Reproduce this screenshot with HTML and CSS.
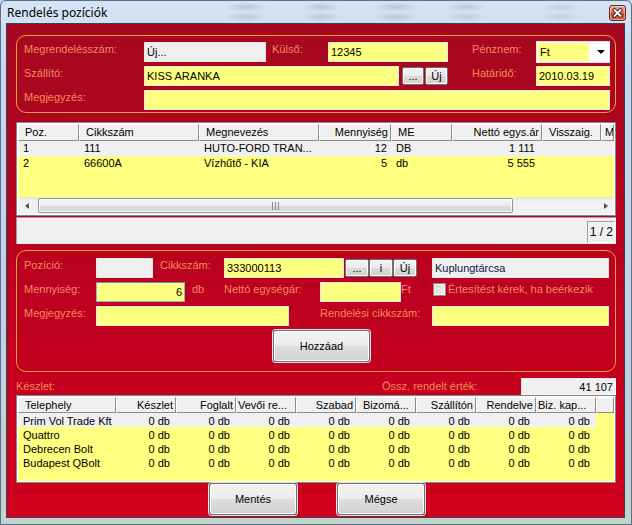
FILE: index.html
```html
<!DOCTYPE html>
<html lang="hu">
<head>
<meta charset="utf-8">
<title>Rendelés pozíciók</title>
<link rel="stylesheet" href="styles.css">
</head>
<body>
<div class="window">
  <div class="titlebar">
    <span class="title">Rendelés pozíciók</span>
    <span class="close">
      <svg width="15" height="14" viewBox="0 0 15 14">
        <path d="M4.5 4 L10.5 10 M10.5 4 L4.5 10" stroke="#3a1a14" stroke-width="3.6" stroke-linecap="square"/>
        <path d="M4.5 4 L10.5 10 M10.5 4 L4.5 10" stroke="#ffffff" stroke-width="1.8" stroke-linecap="square"/>
      </svg>
    </span>
  </div>

  <div class="client">
    <div class="group g1">
      <div class="row">
        <span class="lbl w120">Megrendelésszám:</span>
        <span class="box gray w122">Új...</span>
        <span class="lbl ml6 w56">Külső:</span>
        <span class="box w120">12345</span>
        <span class="lbl ml24 w64">Pénznem:</span>
        <span class="select"><span class="sel-val">Ft</span><span class="sel-arrow"></span></span>
      </div>
      <div class="row">
        <span class="lbl w120">Szállító:</span>
        <span class="box w255">KISS ARANKA</span>
        <span class="sbtn ml3 w22">...</span>
        <span class="sbtn ml1 w23">Új</span>
        <span class="lbl ml24 w64">Határidő:</span>
        <span class="box w74">2010.03.19</span>
      </div>
      <div class="row">
        <span class="lbl w120">Megjegyzés:</span>
        <span class="box w466"></span>
      </div>
    </div>

    <div class="grid grid1">
      <div class="ghead cols1">
        <div class="hc">Poz.</div>
        <div class="hc">Cikkszám</div>
        <div class="hc">Megnevezés</div>
        <div class="hc r">Mennyiség</div>
        <div class="hc">ME</div>
        <div class="hc r">Nettó egys.ár</div>
        <div class="hc">Visszaig.</div>
        <div class="hc last">M</div>
      </div>
      <div class="gbody b1">
        <div class="gr cols1 sel">
          <div class="c">1</div><div class="c">111</div><div class="c">HUTO-FORD TRAN...</div>
          <div class="c r">12</div><div class="c">DB</div><div class="c r p7">1 111</div><div class="c"></div><div class="c"></div>
        </div>
        <div class="gr cols1">
          <div class="c">2</div><div class="c">66600A</div><div class="c">Vízhűtő - KIA</div>
          <div class="c r">5</div><div class="c">db</div><div class="c r p7">5 555</div><div class="c"></div><div class="c"></div>
        </div>
      </div>
      <div class="hscroll">
        <span class="sb-btn"><span class="tri-l"></span></span>
        <span class="sb-track">
          <span class="sb-thumb">
            <svg width="9" height="8" viewBox="0 0 9 8"><path d="M1.5 0 V8 M4.5 0 V8 M7.5 0 V8" stroke="#8a8a8a" stroke-width="1"/></svg>
          </span>
        </span>
        <span class="sb-btn"><span class="tri-r"></span></span>
      </div>
    </div>

    <div class="status">
      <span class="pages">1 / 2</span>
    </div>

    <div class="group g2">
      <div class="row">
        <span class="lbl w72">Pozíció:</span>
        <span class="box gray w57"></span>
        <span class="lbl ml7 w64">Cikkszám:</span>
        <span class="box w120">333000113</span>
        <span class="sbtn ml1 w24">...</span>
        <span class="sbtn w24">i</span>
        <span class="sbtn w24">Új</span>
        <span class="box gray navy ml15 w177">Kuplungtárcsa</span>
      </div>
      <div class="row">
        <span class="lbl w72">Mennyiség:</span>
        <span class="box focus r w89">6</span>
        <span class="lbl ml7 w32">db</span>
        <span class="lbl w96">Nettó egységár:</span>
        <span class="box w81"></span>
        <span class="lbl w32">Ft</span>
        <span class="chk"></span>
        <span class="lbl ml2">Értesítést kérek, ha beérkezik</span>
      </div>
      <div class="row">
        <span class="lbl w72">Megjegyzés:</span>
        <span class="box w193"></span>
        <span class="lbl ml31 w112">Rendelési cikkszám:</span>
        <span class="box w177"></span>
      </div>
      <div class="btnrow">
        <span class="btn add">Hozzáad</span>
      </div>
    </div>

    <div class="stock">
      <span class="lbl w366">Készlet:</span>
      <span class="lbl w139">Össz. rendelt érték:</span>
      <span class="total">41 107</span>
    </div>

    <div class="grid grid2">
      <div class="ghead cols2">
        <div class="hc">Telephely</div>
        <div class="hc r">Készlet</div>
        <div class="hc r">Foglalt</div>
        <div class="hc p2">Vevői re...</div>
        <div class="hc r">Szabad</div>
        <div class="hc">Bizomá...</div>
        <div class="hc r">Szállítón</div>
        <div class="hc r">Rendelve</div>
        <div class="hc p2">Biz. kap...</div>
        <div class="hc"></div>
      </div>
      <div class="gbody b2">
        <div class="gr2 cols2">
          <div class="c sel">Prim Vol Trade Kft</div><div class="c r sel">0 db</div><div class="c r sel">0 db</div><div class="c r sel">0 db</div><div class="c r sel">0 db</div><div class="c r sel">0 db</div><div class="c r sel">0 db</div><div class="c r sel">0 db</div><div class="c r sel">0 db</div><div class="c"></div>
        </div>
        <div class="gr2 cols2">
          <div class="c">Quattro</div><div class="c r">0 db</div><div class="c r">0 db</div><div class="c r">0 db</div><div class="c r">0 db</div><div class="c r">0 db</div><div class="c r">0 db</div><div class="c r">0 db</div><div class="c r">0 db</div><div class="c"></div>
        </div>
        <div class="gr2 cols2">
          <div class="c">Debrecen Bolt</div><div class="c r">0 db</div><div class="c r">0 db</div><div class="c r">0 db</div><div class="c r">0 db</div><div class="c r">0 db</div><div class="c r">0 db</div><div class="c r">0 db</div><div class="c r">0 db</div><div class="c"></div>
        </div>
        <div class="gr2 cols2">
          <div class="c">Budapest QBolt</div><div class="c r">0 db</div><div class="c r">0 db</div><div class="c r">0 db</div><div class="c r">0 db</div><div class="c r">0 db</div><div class="c r">0 db</div><div class="c r">0 db</div><div class="c r">0 db</div><div class="c"></div>
        </div>
      </div>
    </div>

    <div class="actions">
      <span class="btn save">Mentés</span>
      <span class="btn cancel">Mégse</span>
    </div>
  </div>
</div>
</body>
</html>
```

FILE: styles.css
```css
* { box-sizing: border-box; }
html, body { margin: 0; padding: 0; }
body {
  width: 632px;
  height: 525px;
  overflow: hidden;
  font-family: "Liberation Sans", Arial, sans-serif;
  font-size: 11px;
  color: #000;
  background: #c4d6ea;
}

/* window frame */
.window {
  width: 632px;
  height: 525px;
  border: 1px solid #5d6f86;
  border-radius: 6px 6px 0 0;
  background: linear-gradient(180deg, #d6e5f5 0%, #c5d8ed 12%, #bfd2e6 60%, #c3d3cc 100%);
  display: flex;
  flex-direction: column;
}
.titlebar {
  height: 22px;
  display: flex;
  align-items: flex-start;
  padding: 0 5px 0 6px;
  background:
    radial-gradient(ellipse 22px 5px at 245px 6px, rgba(120,132,148,0.30), transparent),
    radial-gradient(ellipse 22px 5px at 245px 16px, rgba(120,132,148,0.25), transparent),
    radial-gradient(ellipse 20px 5px at 320px 6px, rgba(120,132,148,0.30), transparent),
    radial-gradient(ellipse 20px 5px at 320px 16px, rgba(120,132,148,0.25), transparent),
    radial-gradient(ellipse 24px 5px at 395px 6px, rgba(120,132,148,0.30), transparent),
    radial-gradient(ellipse 24px 5px at 395px 16px, rgba(120,132,148,0.25), transparent),
    radial-gradient(ellipse 20px 5px at 465px 6px, rgba(120,132,148,0.28), transparent),
    radial-gradient(ellipse 20px 5px at 465px 16px, rgba(120,132,148,0.22), transparent),
    radial-gradient(ellipse 20px 5px at 560px 6px, rgba(120,132,148,0.22), transparent),
    radial-gradient(ellipse 20px 5px at 560px 16px, rgba(120,132,148,0.18), transparent);
}
.title {
  flex: 1;
  font-family: "Noto Sans", "Open Sans", sans-serif;
  font-size: 12px;
  line-height: 16px;
  margin-top: 4px;
  color: #000;
}
.close {
  width: 17px;
  height: 16px;
  margin-top: 4px;
  border: 1px solid #6e2a1c;
  border-radius: 3px;
  background: linear-gradient(180deg, #eab0a0 0%, #db8066 45%, #c8482c 52%, #d86a48 100%);
  box-shadow: inset 0 0 0 1px rgba(255,255,255,0.35);
  display: flex;
  align-items: center;
  justify-content: center;
}

.client {
  margin: 0 6px 0 5px;
  height: 495px;
  border: 1px solid #34435a;
  background: linear-gradient(180deg, #a6081f 0%, #bd0120 55%, #d1001e 100%);
  padding: 11px 8px 0 9px;
  display: flex;
  flex-direction: column;
}

/* group boxes */
.group {
  border: 1px solid #f0a13a;
  border-radius: 10px;
}
.g1 {
  height: 78px;
  padding: 6px 5px 0 7px;
  display: flex;
  flex-direction: column;
  gap: 4px;
}
.g2 {
  height: 122px;
  margin-top: 6px;
  padding: 7px 5px 0 7px;
  display: flex;
  flex-direction: column;
  gap: 4px;
}
.row {
  display: flex;
  align-items: center;
  height: 20px;
}
.lbl {
  color: #f58a5c;
  white-space: nowrap;
  line-height: 14px;
  align-self: flex-start;
  flex: none;
}
.box {
  height: 20px;
  border: 1px solid #e4e4e4;
  background: #ffff80;
  padding: 0 2px;
  line-height: 18px;
  white-space: nowrap;
  overflow: hidden;
  flex: none;
}
.box.gray { background: #f0f0f0; }
.box.navy { color: #10104a; }
.box.focus { border-color: #8fb2d3; border-top-color: #5d8fbf; }
.box.r { text-align: right; }

.select {
  width: 74px;
  height: 22px;
  margin: -1px 0;
  background: #fff;
  border: 1px solid #e4e4e4;
  padding: 1px;
  display: flex;
  align-items: center;
  flex: none;
}
.sel-val {
  width: 51px;
  height: 18px;
  background: #ffff80;
  line-height: 18px;
  padding-left: 2px;
}
.sel-arrow {
  margin-left: 8px;
  width: 0;
  height: 0;
  border-left: 4px solid transparent;
  border-right: 4px solid transparent;
  border-top: 4px solid #000;
}

.sbtn {
  height: 18px;
  border: 1px solid #707070;
  border-radius: 2px;
  background: linear-gradient(180deg, #f4f4f4 0%, #ebebeb 48%, #dcdcdc 52%, #d0d0d0 100%);
  box-shadow: inset 0 0 0 1px #fbfbfb;
  text-align: center;
  line-height: 16px;
  flex: none;
}

.chk {
  width: 13px;
  height: 13px;
  margin-top: 1px;
  align-self: flex-start;
  border: 1px solid #8e8f8f;
  background: linear-gradient(135deg, #d4d4d4 0%, #f6f6f6 100%);
  box-shadow: inset 0 0 0 1px #f2f2f2;
  flex: none;
}

.btn {
  display: flex;
  align-items: center;
  justify-content: center;
  height: 32px;
  border: 1px solid #707070;
  border-radius: 3px;
  background: linear-gradient(180deg, #f3f3f3 0%, #ececec 48%, #dedede 52%, #d0d0d0 100%);
  box-shadow: inset 0 0 0 1px #fcfcfc, 0 0 0 1px #e2e2e2;
  font-size: 11px;
  color: #000;
  flex: none;
}
.btnrow { display: flex; height: 32px; }
.add { width: 97px; margin-left: 249px; }

/* widths & margins */
.w22 { width: 22px; } .w23 { width: 23px; } .w24 { width: 24px; }
.w32 { width: 32px; } .w56 { width: 56px; } .w57 { width: 57px; }
.w64 { width: 64px; } .w72 { width: 72px; } .w74 { width: 74px; }
.w81 { width: 81px; } .w89 { width: 89px; } .w96 { width: 96px; }
.w112 { width: 112px; } .w120 { width: 120px; } .w122 { width: 122px; }
.w139 { width: 139px; } .w177 { width: 177px; } .w193 { width: 193px; }
.w255 { width: 255px; } .w366 { width: 366px; } .w466 { width: 466px; }
.ml1 { margin-left: 1px; } .ml2 { margin-left: 2px; } .ml3 { margin-left: 3px; }
.ml6 { margin-left: 6px; } .ml7 { margin-left: 7px; } .ml15 { margin-left: 15px; }
.ml24 { margin-left: 24px; } .ml31 { margin-left: 31px; }

/* grids */
.grid {
  border: 1px solid #828790;
  padding: 1px;
  background: #fff;
  display: flex;
  flex-direction: column;
  overflow: hidden;
}
.grid1 { height: 94px; margin-top: 9px; }
.grid2 { height: 88px; }
.cols1 { display: grid; grid-template-columns: 61px 120px 120px 72px 61px 90px 59px 1fr; }
.cols2 { display: grid; grid-template-columns: 98px 60px 60px 60px 60px 60px 60px 60px 60px 1fr; }
.ghead { background: #f0f0f0; flex: none; }
.grid1 .ghead { height: 17px; }
.grid2 .ghead { height: 16px; }
.hc {
  border-left: 1px solid #ffffff;
  border-top: 1px solid #ffffff;
  border-right: 1px solid #8c8c8c;
  border-bottom: 1px solid #8c8c8c;
  background: #f0f0f0;
  padding: 1px 3px 0 6px;
  line-height: 13px;
  white-space: nowrap;
  overflow: hidden;
}
.hc.r { text-align: right; padding-right: 2px; }
.hc.p2 { padding-left: 1px; }
.hc.last { padding-left: 3px; padding-right: 0; }
.gbody { background: #ffff80; flex: none; overflow: hidden; }
.b1 { height: 56px; }
.b2 { height: 68px; }
.gr { height: 15px; line-height: 15px; }
.gr.sel { background: #f0f0f0; }
.gr2 { height: 14px; }
.gr2 .c { padding-top: 2px; line-height: 12px; }
.c {
  padding: 0 4px 0 5px;
  white-space: nowrap;
  overflow: hidden;
}
.c.r { text-align: right; }
.c.p7 { padding-right: 7px; }
.gr2 .c.r { padding-right: 6px; }
.c.sel { background: #f0f0f0; }

.hscroll {
  height: 17px;
  display: flex;
  background: linear-gradient(180deg, #e4e4e4 0%, #f2f2f2 30%, #f2f2f2 100%);
  flex: none;
}
.sb-btn {
  width: 17px;
  display: flex;
  align-items: center;
  justify-content: center;
  flex: none;
}
.tri-l { width: 0; height: 0; border-top: 3.5px solid transparent; border-bottom: 3.5px solid transparent; border-right: 4px solid #505050; }
.tri-r { width: 0; height: 0; border-top: 3.5px solid transparent; border-bottom: 3.5px solid transparent; border-left: 4px solid #505050; }
.sb-track { flex: 1; display: flex; align-items: center; }
.sb-thumb {
  width: 475px;
  height: 15px;
  margin-left: 3px;
  border: 1px solid #979797;
  border-radius: 2px;
  background: linear-gradient(180deg, #f6f6f6 0%, #ececec 50%, #dcdcdc 51%, #d4d4d4 100%);
  box-shadow: inset 0 0 0 1px #fafafa;
  display: flex;
  align-items: center;
  justify-content: center;
}

.status {
  height: 27px;
  margin-top: 1px;
  background: #f0f0f0;
  border-top: 1px solid #a0a0a0;
  border-left: 1px solid #a0a0a0;
  display: flex;
  justify-content: flex-end;
  align-items: flex-end;
  padding: 0 1px 1px 0;
}
.pages {
  width: 28px;
  height: 22px;
  border: 1px solid;
  border-color: #a0a0a0 #ffffff #ffffff #a0a0a0;
  font-size: 12px;
  line-height: 20px;
  text-align: right;
  padding-right: 1px;
}

.stock {
  height: 17px;
  margin-top: 6px;
  display: flex;
  align-items: flex-start;
}
.stock .lbl { line-height: 15px; margin-top: 1px; }
.total {
  width: 95px;
  height: 17px;
  background: #f0f0f0;
  border: 1px solid;
  border-color: #e8e8e8 #f4f4f4 #f4f4f4 #e8e8e8;
  text-align: right;
  line-height: 16px;
  padding-right: 2px;
}

.actions {
  height: 32px;
  display: flex;
}
.save { width: 88px; margin-left: 193px; }
.cancel { width: 88px; margin-left: 40px; }
```
